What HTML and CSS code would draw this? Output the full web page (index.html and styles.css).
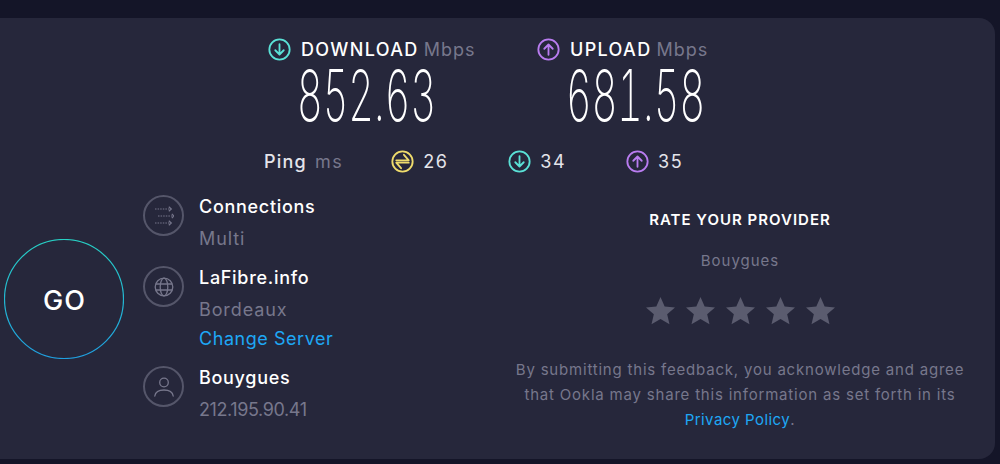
FILE: index.html
```html
<!DOCTYPE html>
<html lang="en">
<head>
  <meta charset="UTF-8">
  <title>Speedtest Result</title>
  <link rel="stylesheet" href="styles.css">
</head>
<body>
  <svg class="icon-defs" width="0" height="0" xmlns="http://www.w3.org/2000/svg">
    <defs>
      <linearGradient id="goRing" x1="0" y1="0" x2="0" y2="1">
        <stop offset="0" stop-color="#27d0c4"/>
        <stop offset="1" stop-color="#1f9fe0"/>
      </linearGradient>
      <symbol id="arrowDown" viewBox="0 0 24 24">
        <circle cx="12" cy="12" r="10.6" fill="none" stroke="currentColor" stroke-width="1.9"/>
        <path d="M12 6.5v10.5M7.6 12.8l4.4 4.4 4.4-4.4" fill="none" stroke="currentColor" stroke-width="1.9" stroke-linecap="round" stroke-linejoin="round"/>
      </symbol>
      <symbol id="arrowUp" viewBox="0 0 24 24">
        <circle cx="12" cy="12" r="10.6" fill="none" stroke="currentColor" stroke-width="1.9"/>
        <path d="M12 17.5V7M7.6 11.2L12 6.8l4.4 4.4" fill="none" stroke="currentColor" stroke-width="1.9" stroke-linecap="round" stroke-linejoin="round"/>
      </symbol>
    </defs>
  </svg>

  <main class="panel">
    <section class="speeds">
      <div class="speed speed-down">
        <div class="speed-label">
          <svg class="speed-icon"><use href="#arrowDown"/></svg>
          <span class="speed-name">DOWNLOAD</span> <span class="unit">Mbps</span>
        </div>
        <div class="speed-value"><span>852.63</span></div>
      </div>
      <div class="speed speed-up">
        <div class="speed-label">
          <svg class="speed-icon"><use href="#arrowUp"/></svg>
          <span class="speed-name">UPLOAD</span> <span class="unit">Mbps</span>
        </div>
        <div class="speed-value"><span>681.58</span></div>
      </div>
    </section>

    <section class="ping">
      <span class="ping-label">Ping</span>
      <span class="unit ping-unit">ms</span>
      <div class="ping-item ping-idle">
        <svg class="ping-icon" viewBox="0 0 24 24" xmlns="http://www.w3.org/2000/svg">
          <circle cx="12" cy="12" r="10.6" fill="none" stroke="currentColor" stroke-width="1.9"/>
          <path d="M5.500 10.800h13L13.500 5M18.500 13.200h-13l5 5.800" fill="none" stroke="currentColor" stroke-width="1.9" stroke-linecap="round" stroke-linejoin="round"/>
        </svg>
        <span>26</span>
      </div>
      <div class="ping-item ping-down">
        <svg class="ping-icon"><use href="#arrowDown"/></svg>
        <span>34</span>
      </div>
      <div class="ping-item ping-up">
        <svg class="ping-icon"><use href="#arrowUp"/></svg>
        <span>35</span>
      </div>
    </section>

    <section class="lower">
      <div class="go-wrap">
        <div class="go">
          <svg class="go-ring" viewBox="0 0 120 120" xmlns="http://www.w3.org/2000/svg">
            <circle cx="60" cy="60" r="59.5" fill="none" stroke="url(#goRing)" stroke-width="1.2"/>
          </svg>
          <span>GO</span>
        </div>
      </div>

      <div class="hosts">
        <div class="host">
          <div class="host-icon">
            <svg viewBox="0 0 20 20" xmlns="http://www.w3.org/2000/svg" fill="none" stroke="#77778c" stroke-width="1">
              <path d="M1 3h15.500M4 10h15.500M1 17h15.500" stroke-dasharray="1.500 1.100"/>
              <path d="M14.800 .8L17.300 3l-2.500 2.200M17.800 7.800L20 10l-2.200 2.200M14.800 14.800l2.500 2.200-2.500 2.200" stroke-width="1.200"/>
            </svg>
          </div>
          <div class="host-text">
            <div class="host-title">Connections</div>
            <div class="host-sub">Multi</div>
          </div>
        </div>
        <div class="host">
          <div class="host-icon">
            <svg viewBox="0 0 20 20" xmlns="http://www.w3.org/2000/svg" fill="none" stroke="#77778c" stroke-width="1.300">
              <circle cx="10" cy="10" r="8.800"/>
              <ellipse cx="10" cy="10" rx="3.800" ry="8.800"/>
              <path d="M1.800 7h16.400M1.800 13h16.400"/>
            </svg>
          </div>
          <div class="host-text">
            <div class="host-title">LaFibre.info</div>
            <div class="host-sub">Bordeaux</div>
            <a class="host-link" href="#">Change Server</a>
          </div>
        </div>
        <div class="host">
          <div class="host-icon">
            <svg viewBox="0 0 20 20" xmlns="http://www.w3.org/2000/svg" fill="none" stroke="#77778c" stroke-width="1.300">
              <circle cx="10" cy="5.500" r="4.300"/>
              <path d="M.8 19c.6-3.800 4-6 9.200-6s8.600 2.200 9.200 6" stroke-linecap="round"/>
            </svg>
          </div>
          <div class="host-text">
            <div class="host-title">Bouygues</div>
            <div class="host-sub host-ip">212.195.90.41</div>
          </div>
        </div>
      </div>

      <aside class="rate">
        <h2>RATE YOUR PROVIDER</h2>
        <div class="rate-isp">Bouygues</div>
        <div class="stars">
          <svg viewBox="0 0 30 30" xmlns="http://www.w3.org/2000/svg"><path d="M15 1l4.300 9.800 10.700 1-8.100 7 2.400 10.400L15 23.800 5.700 29.200l2.400-10.400-8.100-7 10.700-1z"/></svg>
          <svg viewBox="0 0 30 30" xmlns="http://www.w3.org/2000/svg"><path d="M15 1l4.300 9.800 10.700 1-8.100 7 2.400 10.400L15 23.800 5.700 29.200l2.400-10.400-8.100-7 10.700-1z"/></svg>
          <svg viewBox="0 0 30 30" xmlns="http://www.w3.org/2000/svg"><path d="M15 1l4.300 9.800 10.700 1-8.100 7 2.400 10.400L15 23.800 5.700 29.200l2.400-10.400-8.100-7 10.700-1z"/></svg>
          <svg viewBox="0 0 30 30" xmlns="http://www.w3.org/2000/svg"><path d="M15 1l4.300 9.800 10.700 1-8.100 7 2.400 10.400L15 23.800 5.700 29.200l2.400-10.400-8.100-7 10.700-1z"/></svg>
          <svg viewBox="0 0 30 30" xmlns="http://www.w3.org/2000/svg"><path d="M15 1l4.300 9.800 10.700 1-8.100 7 2.400 10.400L15 23.800 5.700 29.200l2.400-10.400-8.100-7 10.700-1z"/></svg>
        </div>
        <p class="rate-note">By submitting this feedback, you acknowledge and agree<br>that Ookla may share this information as set forth in its<br><a href="#">Privacy Policy</a>.</p>
      </aside>
    </section>
  </main>
</body>
</html>
```

FILE: styles.css
```css
html, body {
  height: 100%;
}

body {
  margin: 0;
  background-color: #141528;
  font-family: 'Inter', Arial, sans-serif;
  color: #fff;
  overflow: hidden;
}

.icon-defs {
  display: block;
  height: 0;
}

.panel {
  box-sizing: border-box;
  width: 995px;
  height: 441px;
  margin-top: 18px;
  background-color: #26273b;
  border-radius: 0 16px 16px 0;
}

.unit {
  color: #77778c;
  letter-spacing: 1px;
}

/* download / upload */
.speeds {
  display: flex;
  gap: 61px;
  padding: 20px 0 0 268px;
}

.speed-label {
  display: flex;
  align-items: center;
  height: 23px;
  font-size: 18px;
  white-space: nowrap;
}

.speed-name {
  font-weight: 500;
  letter-spacing: 1.35px;
  margin-right: 5px;
}

.speed-icon {
  width: 23px;
  height: 23px;
  margin-right: 10px;
}

.speed-down .speed-icon,
.ping-down .ping-icon {
  color: #5ae1d6;
}

.speed-up .speed-icon,
.ping-up .ping-icon {
  color: #b97cf0;
}

.speed-down {
  width: 208px;
}

.speed-up {
  width: 172px;
}

.speed-value {
  height: 62px;
  line-height: 62px;
  margin-top: 3px;
  padding-left: 29px;
  font-size: 71px;
  font-weight: 250;
  font-variant-numeric: tabular-nums;
  white-space: nowrap;
}

.speed-value span {
  display: inline-block;
  transform: scaleX(0.56);
  transform-origin: left center;
}

/* ping row */
.ping {
  display: flex;
  align-items: center;
  height: 23px;
  margin-top: 24px;
  padding-left: 264px;
  font-size: 18px;
}

.ping-label {
  font-weight: 500;
  letter-spacing: 1.2px;
  color: #e4e4ea;
}

.ping-unit {
  margin-left: 8px;
  margin-right: 48px;
  letter-spacing: 1.5px;
}

.ping-item {
  display: flex;
  align-items: center;
  gap: 9px;
  margin-right: 60px;
  letter-spacing: 1.5px;
  color: #e4e4ea;
}

.ping-icon {
  width: 23px;
  height: 23px;
}

.ping-idle .ping-icon {
  color: #efdc6c;
}

/* lower section */
.lower {
  display: flex;
  padding-top: 19px;
}

.go-wrap {
  box-sizing: border-box;
  width: 143px;
  padding: 47px 0 0 4px;
}

.go {
  position: relative;
  display: flex;
  align-items: center;
  justify-content: center;
  width: 120px;
  height: 120px;
  font-size: 27px;
  font-weight: 500;
  letter-spacing: 1px;
}

.go span {
  padding: 2px 0 0 1px;
}

.go-ring {
  position: absolute;
  top: 0;
  left: 0;
  width: 120px;
  height: 120px;
}

.hosts {
  width: 350px;
}

.host {
  display: flex;
  gap: 15px;
  margin-bottom: 10px;
}

.host-icon {
  display: flex;
  align-items: center;
  justify-content: center;
  box-sizing: border-box;
  width: 41px;
  height: 41px;
  margin-top: 3px;
  border: 2px solid #55566a;
  border-radius: 50%;
}

.host-icon svg {
  width: 20px;
  height: 20px;
}

.host-title {
  height: 29px;
  line-height: 29px;
  font-size: 18px;
  font-weight: 500;
  letter-spacing: 0.7px;
}

.host-sub,
.host-link {
  display: block;
  height: 29px;
  line-height: 29px;
  font-size: 18px;
  letter-spacing: 0.9px;
  color: #77778c;
}

.host-sub {
  margin-top: 3px;
}

.host-ip {
  letter-spacing: -0.4px;
}

.host-link {
  letter-spacing: 0.55px;
  color: #1ea7f5;
  text-decoration: none;
}

/* rating */
.rate {
  width: 480px;
  margin-left: 7px;
  text-align: center;
}

.rate h2 {
  margin: 19px 0 0;
  font-size: 15px;
  line-height: 18px;
  font-weight: 600;
  letter-spacing: 1px;
}

.rate-isp {
  margin-top: 23px;
  font-size: 15px;
  line-height: 18px;
  letter-spacing: 1px;
  color: #77778c;
}

.stars {
  display: flex;
  justify-content: center;
  gap: 11px;
  margin-top: 26px;
}

.stars svg {
  width: 29px;
  height: 29px;
  fill: #5b5c6f;
}

.rate-note {
  margin: 32px 0 0;
  font-size: 15px;
  line-height: 25px;
  letter-spacing: 0.8px;
  color: #77778c;
}

.rate-note a {
  letter-spacing: 0.45px;
  color: #1ea7f5;
  text-decoration: none;
}
```
